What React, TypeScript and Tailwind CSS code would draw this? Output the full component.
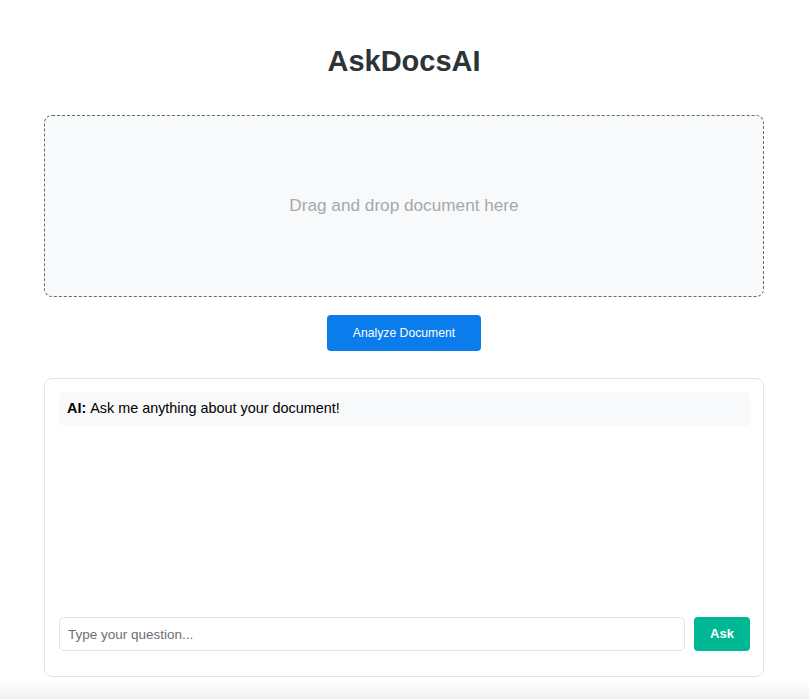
import React, { useState } from 'react';

const font = { fontFamily: '"Liberation Sans", Arial, sans-serif' };

const App: React.FC = () => {
  const [question, setQuestion] = useState('');

  return (
    <div className="min-h-[699px] bg-white flex flex-col" style={font}>
      <div className="w-[720px] ml-[44px] pt-[43px] flex-1">
        <h1 className="text-center text-[29px] leading-[36px] font-bold text-[#2d3436]">
          AskDocsAI
        </h1>

        {/* Drop zone */}
        <div className="mt-[36px] h-[182px] rounded-[8px] border border-dashed border-[#636e72] bg-[#f8f9fa] flex items-center justify-center">
          <p className="text-[17.2px] text-[#a4a9ac]">Drag and drop document here</p>
        </div>

        <div className="flex justify-center mt-[18px]">
          <button className="w-[154px] h-[36px] rounded-[4px] bg-[#0a7ceb] text-white text-[12.2px]">
            Analyze Document
          </button>
        </div>

        {/* Chat */}
        <div className="mt-[27px] h-[299px] rounded-[8px] border border-[#dfe6e9] pl-[14px] pr-[13px] pt-[13px] pb-[25px] flex flex-col">
          <div className="flex-1">
            <div className="h-[34px] rounded-[5px] bg-[#f8f9fa] px-[8px] flex items-center text-[14.4px] text-black">
              <span className="font-bold mr-[4px]">AI:</span>
              Ask me anything about your document!
            </div>
          </div>
          <div className="flex gap-[9px]">
            <input
              value={question}
              onChange={(e) => setQuestion(e.target.value)}
              placeholder="Type your question..."
              className="flex-1 h-[34px] rounded-[5px] border border-[#dfe6e9] px-[8px] text-[13.5px] text-black placeholder:text-[#6b6f72] outline-none"
            />
            <button className="w-[56px] h-[34px] rounded-[4px] bg-[#00b894] text-white text-[13px] font-bold">
              Ask
            </button>
          </div>
        </div>
      </div>
      <div className="h-[19px] bg-gradient-to-b from-white to-[#f1f1f1]" />
    </div>
  );
};

export default App;
